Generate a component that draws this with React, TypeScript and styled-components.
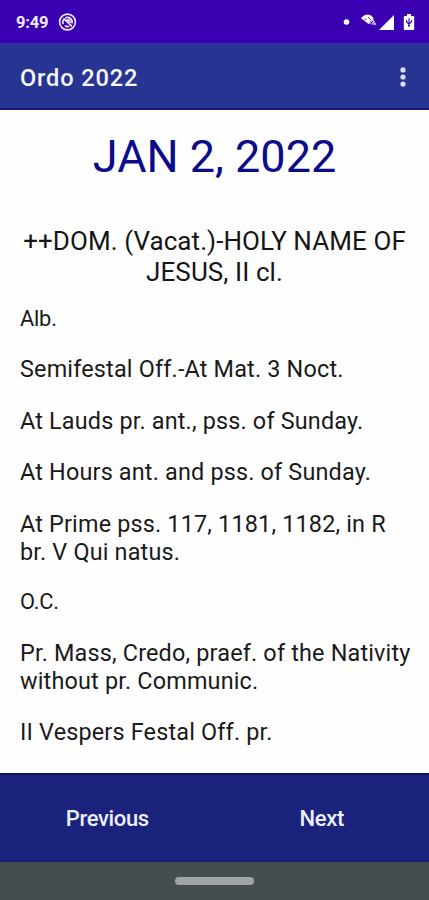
import React from "react";
import styled, { createGlobalStyle } from "styled-components";

const GlobalStyle = createGlobalStyle`
  * { box-sizing: border-box; }
  body { margin: 0; background: #fff; font-family: Roboto, sans-serif; }
`;

const Screen = styled.div`
  width: 429px;
  height: 900px;
  display: flex;
  flex-direction: column;
  overflow: hidden;
  background: #fefefe;
`;

const StatusBar = styled.div`
  height: 43px;
  flex: none;
  display: flex;
  align-items: center;
  justify-content: space-between;
  padding: 1px 13px 0 16px;
  background: #3a00b2;
  color: #fff;
`;

const StatusGroup = styled.div`
  display: flex;
  align-items: center;
`;

const Clock = styled.span`
  width: 42px;
  padding-top: 2px;
  font-size: 16.5px;
  font-weight: 700;
  line-height: 20px;
  letter-spacing: -0.2px;
  color: #f0eaff;
`;

const AppBar = styled.header`
  height: 67px;
  flex: none;
  display: flex;
  align-items: center;
  justify-content: space-between;
  padding: 3px 20px 0;
  background: #283491;
  border-bottom: 2px solid #131a7c;
`;

const AppTitle = styled.h1`
  margin: 0;
  padding-top: 2px;
  font-size: 23.6px;
  font-weight: 500;
  line-height: 28px;
  letter-spacing: 0.85px;
  color: #f5f6ff;
`;

const MenuButton = styled.button`
  display: flex;
  padding: 0;
  border: 0;
  background: none;
`;

const Content = styled.main`
  flex: 1;
  min-height: 0;
  padding-top: 20px;
`;

const DateTitle = styled.h2`
  margin: 0 0 43px;
  font-size: 45px;
  font-weight: 400;
  line-height: 53px;
  text-align: center;
  color: #0b0b8c;
`;

const Feast = styled.h3`
  margin: 0 0 17.5px;
  font-size: 26px;
  font-weight: 400;
  line-height: 31px;
  letter-spacing: 0.08px;
  text-align: center;
  color: #161616;
`;

const Entries = styled.div`
  display: flex;
  flex-direction: column;
  gap: 23.5px;
  padding-left: 20px;
`;

const Entry = styled.p<{ $small?: boolean }>`
  margin: 0;
  font-size: ${(p) => (p.$small ? "21.8px" : "23.4px")};
  line-height: ${(p) => (p.$small ? "26px" : "28px")};
  letter-spacing: ${(p) => (p.$small ? "-0.2px" : "0.18px")};
  white-space: nowrap;
  color: #1a1a1a;
`;

const BottomBar = styled.nav`
  height: 89px;
  flex: none;
  display: grid;
  grid-template-columns: 1fr 1fr;
  background: #1b227c;
  border-top: 2px solid #0b0f6c;
`;

const NavButton = styled.button`
  padding: 0;
  border: 0;
  background: none;
  font-family: inherit;
  font-size: 22px;
  font-weight: 500;
  letter-spacing: -0.35px;
  color: #eceeff;
`;

const GestureBar = styled.div`
  height: 38px;
  flex: none;
  display: flex;
  justify-content: center;
  padding-top: 15px;
  background: #454d51;
`;

const GestureHandle = styled.div`
  width: 79px;
  height: 8px;
  border-radius: 4px;
  background: #a0a4a6;
`;

const entries: { lines: string[]; small?: boolean }[] = [
  { lines: ["Alb."], small: true },
  { lines: ["Semifestal Off.-At Mat. 3 Noct."] },
  { lines: ["At Lauds pr. ant., pss. of Sunday."] },
  { lines: ["At Hours ant. and pss. of Sunday."] },
  { lines: ["At Prime pss. 117, 1181, 1182, in R", "br. V Qui natus."] },
  { lines: ["O.C."], small: true },
  { lines: ["Pr. Mass, Credo, praef. of the Nativity", "without pr. Communic."] },
  { lines: ["II Vespers Festal Off. pr."] },
];

function withBreaks(lines: string[]) {
  return lines.map((line, i) => (
    <React.Fragment key={line}>
      {i > 0 && <br />}
      {line}
    </React.Fragment>
  ));
}

const SyncIcon = () => (
  <svg width="19" height="19" viewBox="0 0 19 19" fill="none" stroke="#eee8ff">
    <circle cx="9.5" cy="9" r="7.9" strokeWidth="1.6" />
    <path d="M5.2 11.2A4.7 4.7 0 0 1 5.5 6.6M7.4 4.9a4.7 4.7 0 0 1 6.6 5.3M11.3 13.3a4.7 4.7 0 0 1-4.4-.7" strokeWidth="1.7" />
    <path d="M5.4 5.4l8.6 8" strokeWidth="1.8" />
    <path d="M7.4 6.9l3.8-.7 2 3.8z" fill="#eee8ff" strokeWidth=".5" />
  </svg>
);

const StatusIcons = () => (
  <svg width="76" height="20" viewBox="0 0 76 20" fill="#fff">
    <circle cx="6.5" cy="10" r="2.8" />
    <path d="M21 6.2C24.3 1.7 30 .9 33.2 5.7l.5 3.8-2.2-1.4-3 4z" />
    <path d="M24.4 7.8l2.1-.8M28 5l3.1 3.2" stroke="#3a00b2" strokeWidth=".8" />
    <path d="M29.4 12l2.6-4M31.6 12.8l2-3.6M34.1 9v4.2M35 11l.8 2" stroke="#d9ccff" strokeWidth="1.1" />
    <path d="M54 3V18H39z" />
    <path d="M67 2h4v2h2.1q1.1 0 1.1 1.1v11.8q0 1.1-1.1 1.1h-8.2q-1.1 0-1.1-1.1V5.1q0-1.1 1.1-1.1H67z" />
    <path d="M69 6.3v7.3M66.6 7.9v2.1l2.4 2 2.4-2V7.9" stroke="#3a00b2" strokeWidth="1.1" fill="none" />
    <circle cx="69" cy="13.7" r="1.1" fill="#3a00b2" />
  </svg>
);

const MoreIcon = () => (
  <svg width="12" height="22" viewBox="0 0 12 22" fill="#d8dcf6">
    <circle cx="6" cy="3.9" r="2.6" />
    <circle cx="6" cy="11" r="2.6" />
    <circle cx="6" cy="18.1" r="2.6" />
  </svg>
);

export default function App() {
  return (
    <Screen>
      <GlobalStyle />
      <StatusBar>
        <StatusGroup>
          <Clock>9:49</Clock>
          <SyncIcon />
        </StatusGroup>
        <StatusIcons />
      </StatusBar>
      <AppBar>
        <AppTitle>Ordo 2022</AppTitle>
        <MenuButton aria-label="More options">
          <MoreIcon />
        </MenuButton>
      </AppBar>
      <Content>
        <DateTitle>JAN 2, 2022</DateTitle>
        <Feast>{withBreaks(["++DOM. (Vacat.)-HOLY NAME OF", "JESUS, II cl."])}</Feast>
        <Entries>
          {entries.map((entry) => (
            <Entry key={entry.lines[0]} $small={entry.small}>
              {withBreaks(entry.lines)}
            </Entry>
          ))}
        </Entries>
      </Content>
      <BottomBar>
        <NavButton>Previous</NavButton>
        <NavButton>Next</NavButton>
      </BottomBar>
      <GestureBar>
        <GestureHandle />
      </GestureBar>
    </Screen>
  );
}
